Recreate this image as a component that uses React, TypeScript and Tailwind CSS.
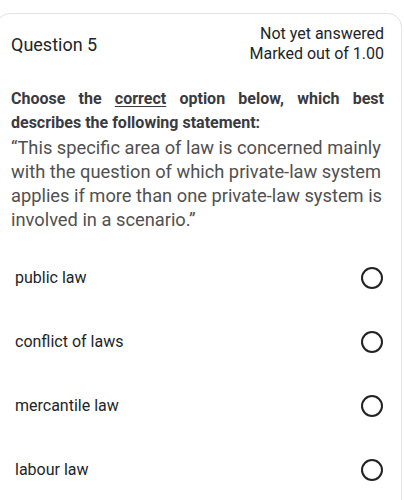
export default function App() {
  const options = ["public law", "conflict of laws", "mercantile law", "labour law"];
  return (
    <div className="w-[404px] h-[500px] overflow-hidden bg-white" style={{ fontFamily: "Roboto, 'Liberation Sans', sans-serif" }}>
      <div className="mt-[13px] ml-[-4px] w-[406px] h-[600px] border border-[#e3e3e3] rounded-[14px] pl-[14px] pr-[17px] pt-[10px]">
        <div className="flex justify-between items-center">
          <div className="text-[18px] text-[#212529] leading-[24px] pt-[2px]">Question 5</div>
          <div className="text-right text-[16px] leading-[20px] text-[#212529]">
            <div>Not yet answered</div>
            <div>Marked out of 1.00</div>
          </div>
        </div>
        <div className="mt-[23px] text-[16px] leading-[24px] font-bold text-[#3a3a3f] text-justify">
          Choose the <span className="underline underline-offset-2">correct</span> option below, which best describes the following statement:
        </div>
        <div className="text-[18.3px] leading-[24px] text-[#505050] mt-[1px]">
          “This specific area of law is concerned mainly with the question of which private-law system applies if more than one private-law system is involved in a scenario.”
        </div>
        <div className="mt-[14px]">
          {options.map((o) => (
            <div key={o} className="h-[64px] flex items-center justify-between pl-[4px]">
              <span className="text-[16px] text-[#212529]">{o}</span>
              <span className="w-[22px] h-[22px] rounded-full border-2 border-[#222] mr-[1px]" />
            </div>
          ))}
        </div>
      </div>
    </div>
  );
}
